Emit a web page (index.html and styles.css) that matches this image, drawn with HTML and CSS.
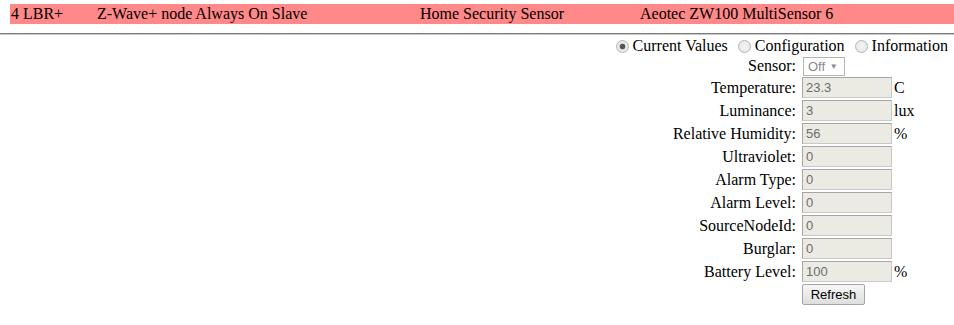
FILE: index.html
```html
<!DOCTYPE html>
<html>
<head>
<meta charset="utf-8">
<link rel="stylesheet" href="styles.css">
</head>
<body>
<div class="node-row">
  <div class="cell c1">4 LBR+</div>
  <div class="cell c2">Z-Wave+ node Always On Slave</div>
  <div class="cell c3">Home Security Sensor</div>
  <div class="cell c4">Aeotec ZW100 MultiSensor 6</div>
</div>
<div class="rule"></div>
<div class="panel">
  <div class="tabs">
    <label class="tab"><input type="radio" name="v" class="radio" checked><span>Current Values</span></label>
    <label class="tab"><input type="radio" name="v" class="radio"><span>Configuration</span></label>
    <label class="tab"><input type="radio" name="v" class="radio"><span>Information</span></label>
  </div>
  <div class="values">
    <div class="lbl">Sensor:</div>
    <div class="val"><span class="sel">Off <span class="arrow">&#9660;</span></span></div>
    <div class="unit"></div>

    <div class="lbl">Temperature:</div>
    <div class="val"><span class="box">23.3</span></div>
    <div class="unit">C</div>

    <div class="lbl">Luminance:</div>
    <div class="val"><span class="box">3</span></div>
    <div class="unit">lux</div>

    <div class="lbl">Relative Humidity:</div>
    <div class="val"><span class="box">56</span></div>
    <div class="unit">%</div>

    <div class="lbl">Ultraviolet:</div>
    <div class="val"><span class="box">0</span></div>
    <div class="unit"></div>

    <div class="lbl">Alarm Type:</div>
    <div class="val"><span class="box">0</span></div>
    <div class="unit"></div>

    <div class="lbl">Alarm Level:</div>
    <div class="val"><span class="box">0</span></div>
    <div class="unit"></div>

    <div class="lbl">SourceNodeId:</div>
    <div class="val"><span class="box">0</span></div>
    <div class="unit"></div>

    <div class="lbl">Burglar:</div>
    <div class="val"><span class="box">0</span></div>
    <div class="unit"></div>

    <div class="lbl">Battery Level:</div>
    <div class="val"><span class="box">100</span></div>
    <div class="unit">%</div>

    <div class="lbl"></div>
    <div class="val"><button class="btn">Refresh</button></div>
    <div class="unit"></div>
  </div>
</div>
</body>
</html>
```
FILE: styles.css
```css
html, body {
  margin: 0;
  padding: 0;
  background: #fff;
}
body {
  font-family: "Liberation Serif", "Times New Roman", serif;
  font-size: 16px;
  color: #000;
}
.node-row {
  margin: 4px 0 0 10px;
  height: 20px;
  background: #ff8888;
  display: grid;
  grid-template-columns: 86px 323px 220px 1fr;
  line-height: 20px;
}
.cell {
  padding-left: 1px;
  white-space: nowrap;
}
.rule {
  margin-top: 9px;
  height: 1px;
  background: #7a7a7a;
  border-bottom: 1px solid #c8c8c8;
}
.panel {
  display: flex;
  flex-direction: column;
  align-items: flex-end;
  padding-right: 6px;
}
.tabs {
  display: flex;
  gap: 10px;
  height: 20px;
  line-height: 20px;
  margin-top: 1px;
  white-space: nowrap;
}
.tab {
  display: flex;
  align-items: center;
  gap: 4px;
}
.radio {
  appearance: none;
  -webkit-appearance: none;
  width: 13px;
  height: 13px;
  margin: 0;
  border-radius: 50%;
  border: 1px solid #b5b5b5;
  background: radial-gradient(circle, #f4f4f4 0, #e4e4e4 100%);
  box-sizing: border-box;
}
.radio:checked {
  background: radial-gradient(circle, #555 0, #555 2.5px, #e8e8e8 3.2px, #e8e8e8 100%);
}
.values {
  display: grid;
  grid-template-columns: auto 91px 22px;
  grid-template-rows: 20px;
  grid-auto-rows: 23px;
  margin-right: 33px;
  align-items: center;
}
.lbl {
  text-align: right;
  padding-right: 6px;
  white-space: nowrap;
}
.val {
  display: flex;
  align-items: center;
}
.unit {
  padding-left: 1px;
}
.box {
  display: block;
  box-sizing: border-box;
  width: 90px;
  height: 21px;
  border: 1px solid #a6a6a6;
  border-right-color: #c8c8c8;
  border-bottom-color: #c8c8c8;
  background: #ebebe4;
  color: #6d6d6d;
  font-family: "Liberation Sans", Arial, sans-serif;
  font-size: 13px;
  line-height: 19px;
  padding-left: 3px;
}
.sel {
  display: block;
  box-sizing: border-box;
  width: 42px;
  height: 19px;
  border: 1px solid #b4b4b4;
  background: #fff;
  color: #8a8a8a;
  font-family: "Liberation Sans", Arial, sans-serif;
  font-size: 13px;
  line-height: 17px;
  padding-left: 4px;
  margin-left: 1px;
}
.arrow {
  font-size: 8px;
  vertical-align: 2px;
  margin-left: 1px;
}
.btn {
  box-sizing: border-box;
  height: 21px;
  width: 63px;
  padding: 0;
  border: 1px solid #a5a5a5;
  border-radius: 2px;
  background: linear-gradient(#f6f6f6, #dedede);
  font-family: "Liberation Sans", Arial, sans-serif;
  font-size: 13px;
  color: #000;
}
```
